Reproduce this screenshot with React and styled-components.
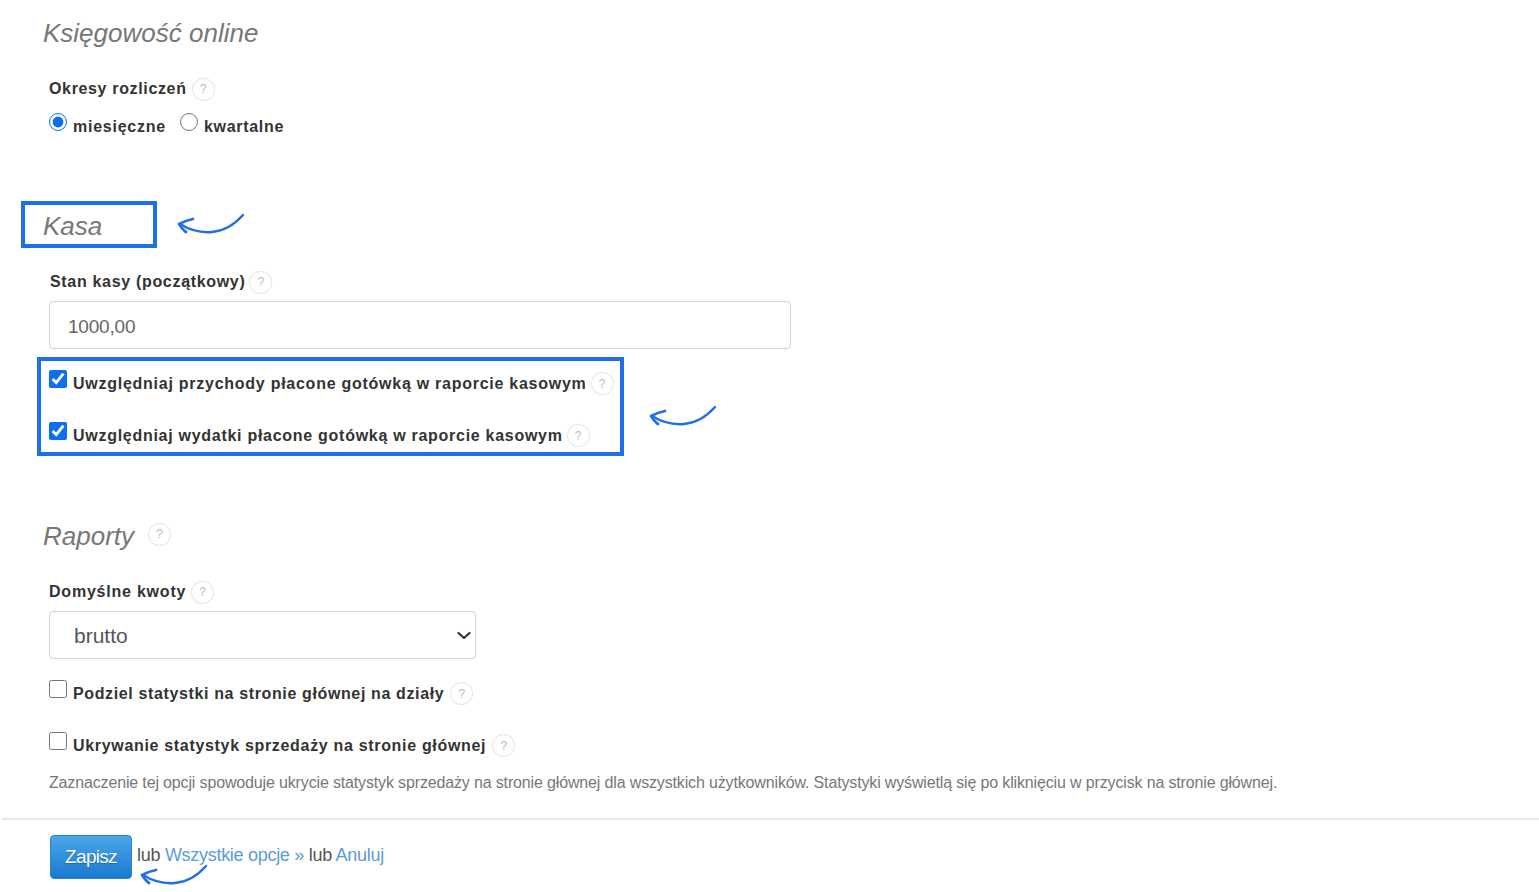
import React from "react";
import styled, { createGlobalStyle } from "styled-components";

const Global = createGlobalStyle`
  html, body { margin: 0; padding: 0; background: #fff; }
  body { font-family: "Liberation Sans", Arial, sans-serif; color: #333; }
`;
const chevron = `url("data:image/svg+xml,%3Csvg xmlns='http://www.w3.org/2000/svg' width='14' height='9' viewBox='0 0 14 9' fill='none' stroke='%23333' stroke-width='2.2' stroke-linecap='round' stroke-linejoin='round'%3E%3Cpath d='M1.5 2l5.5 5 5.5-5'/%3E%3C/svg%3E")`;

const Page = styled.div`
  width: 1539px; height: 892px; overflow: hidden; box-sizing: border-box;
  padding-top: 16px; display: flex; flex-direction: column; position: relative;
`;
const Section = styled.section`
  padding-left: 49px;
  margin-top: ${p => p.$top || 0}px;
  display: flex; flex-direction: column; align-items: flex-start;
`;
const Title = styled.h2`
  margin: 0 0 0 -6px; font-size: 26px; line-height: 34px; font-weight: 400; font-style: italic;
  color: #777; letter-spacing: 0; display: flex; align-items: center;
`;
const TitleRow = styled.div`
  display: flex; align-items: center; gap: 14px; margin-left: -6px;
  & > h2 { margin-left: 0; }
`;
const TitleHelp = styled.span`
  width: 23px; height: 23px; box-sizing: border-box; border: 1px solid #e6e6e6; border-radius: 50%;
  color: #bbb; font-size: 12px; display: inline-flex; align-items: center; justify-content: center;
  flex: none; background: #fff; margin-bottom: 4px;
  box-shadow: 0 0 1px rgba(0,0,0,.06);
`;
const KasaRow = styled.div`
  display: flex; align-items: center; gap: 20px; margin-left: -28px;
`;
const HighlightTitle = styled.div`
  width: 136px; height: 47px; box-sizing: border-box; border: 4px solid #1e6fe8;
  padding: 2px 0 0 18px; display: flex; align-items: center;
  & > h2 { margin: 0; }
`;
const LabelRow = styled.div`
  display: flex; align-items: center; gap: ${p => p.$gap ?? 5}px; margin-top: ${p => p.$top || 0}px;
  margin-left: ${p => p.$left || 0}px;
`;
const Label = styled.span`
  font-size: 16px; line-height: 24px; font-weight: 700; color: #333; white-space: nowrap;
  letter-spacing: ${p => p.$ls ?? 0.65}px;
`;
const Help = styled.span`
  width: 23px; height: 23px; box-sizing: border-box; border: 1px solid #e6e6e6; border-radius: 50%;
  color: #bbb; font-size: 12px; display: inline-flex; align-items: center; justify-content: center;
  flex: none; background: #fff;
  box-shadow: 0 0 1px rgba(0,0,0,.06);
`;
const Options = styled.div`
  display: flex; align-items: flex-start; margin-top: 12px;
`;
const Option = styled.label`
  display: flex; align-items: flex-start; margin-right: ${p => p.$mr || 0}px;
`;
const Radio = styled.input.attrs({ type: "radio" })`
  width: 18px; height: 18px; margin: 0 6px 0 0; accent-color: #0b6ef5; flex: none;
`;
const OptionText = styled(Label)`
  margin-top: 2px; display: block;
`;
const Field = styled.input`
  width: 742px; height: 48px; box-sizing: border-box; border: 1px solid #d4d4d4; border-radius: 4px;
  padding: 3px 0 0 18px; margin-top: 7px; font: 19px "Liberation Sans", sans-serif;
  color: #666; outline: none; letter-spacing: -0.2px; background: #fff;
`;
const CheckGroup = styled.div`
  width: 587px; height: 99px; box-sizing: border-box; border: 4px solid #1e6fe8;
  margin: 8px 0 0 -12px; padding: 9px 0 0 8px; display: flex; flex-direction: column; gap: 27px;
`;
const CheckRow = styled.label`
  display: flex; align-items: flex-start; height: 25px; margin-top: ${p => p.$top || 0}px;
`;
const Check = styled.input.attrs({ type: "checkbox" })`
  width: 18px; height: 18px; margin: 0 6px 0 0; accent-color: #0b6ef5; flex: none;
`;
const CheckText = styled(Label)`
  margin: 2px ${p => p.$after ?? 5}px 0 0; display: block;
`;
const CheckHelp = styled(Help)`
  margin-top: 2px;
`;
const Dropdown = styled.select`
  width: 427px; height: 48px; box-sizing: border-box; border: 1px solid #d4d4d4; border-radius: 4px;
  margin-top: 7px; padding-left: 24px; font: 21px "Liberation Sans", sans-serif; color: #555;
  appearance: none; background: #fff ${chevron} no-repeat right 4px center;
`;
const Note = styled.p`
  margin: 14px 0 0; font-size: 16px; line-height: 24px; color: #777; white-space: nowrap; letter-spacing: -0.15px;
`;
const Footer = styled.footer`
  position: absolute; left: 2px; right: 0; top: 818px; height: 74px; box-sizing: border-box;
  border-top: 2px solid #e8e8e8; padding: 15px 0 0 48px; display: flex; align-items: flex-start;
  font-size: 18px; line-height: 40px; color: #555; letter-spacing: -0.29px;
`;
const SaveButton = styled.button`
  width: 82px; height: 44px; box-sizing: border-box; border: 1px solid #2a85d0; border-radius: 4px;
  background: linear-gradient(#4ba6ea, #1b79d0); color: #fff; font: 19px "Liberation Sans", sans-serif;
  letter-spacing: -0.7px; padding: 0; margin-right: 5px; text-shadow: 0 1px 1px rgba(0,0,0,.25);
`;
const FooterText = styled.span`
  white-space: pre;
`;
const FooterLink = styled.a`
  color: #5c9cd8; text-decoration: none;
`;
const ArrowSvg = styled.svg`
  display: block; flex: none; overflow: visible;
`;
const ArrowSlot = styled.div`
  position: absolute; left: ${p => p.$x}px; top: ${p => p.$y}px;
`;

const Arrow = () => (
  <ArrowSvg width="68" height="24" viewBox="0 0 68 24" fill="none" stroke="#1e6fe8" strokeLinecap="round" strokeLinejoin="round">
    <path d="M66 2 C58 11 48 18 35 19 C23 20 11 16 3 11" strokeWidth="2.4" />
    <path d="M16 6 C11 7 6 9 2 11 C4 14 6 17 9 19" strokeWidth="2.8" />
  </ArrowSvg>
);

export default function App() {
  return (
    <Page>
      <Global />
      <Section>
        <Title>Księgowość online</Title>
        <LabelRow $top={27}><Label>Okresy rozliczeń</Label><Help>?</Help></LabelRow>
        <Options>
          <Option $mr={14}><Radio name="okres" defaultChecked /><OptionText $ls={0.75}>miesięczne</OptionText></Option>
          <Option><Radio name="okres" /><OptionText $ls={0.7}>kwartalne</OptionText></Option>
        </Options>
      </Section>
      <Section $top={62}>
        <KasaRow>
          <HighlightTitle><Title>Kasa</Title></HighlightTitle>
          <Arrow />
        </KasaRow>
        <LabelRow $top={22} $gap={4} $left={1}><Label $ls={0.68}>Stan kasy (początkowy)</Label><Help>?</Help></LabelRow>
        <Field defaultValue="1000,00" />
        <CheckGroup>
          <CheckRow><Check defaultChecked /><CheckText $ls={0.74} $after={4}>Uwzględniaj przychody płacone gotówką w raporcie kasowym</CheckText><CheckHelp>?</CheckHelp></CheckRow>
          <CheckRow><Check defaultChecked /><CheckText $ls={0.72} $after={4}>Uwzględniaj wydatki płacone gotówką w raporcie kasowym</CheckText><CheckHelp>?</CheckHelp></CheckRow>
        </CheckGroup>
      </Section>
      <ArrowSlot $x={649} $y={405}><Arrow /></ArrowSlot>
      <Section $top={63}>
        <TitleRow><Title>Raporty</Title><TitleHelp>?</TitleHelp></TitleRow>
        <LabelRow $top={27}><Label $ls={0.78}>Domyślne kwoty</Label><Help>?</Help></LabelRow>
        <Dropdown defaultValue="brutto"><option>brutto</option><option>netto</option></Dropdown>
        <CheckRow $top={21}><Check /><CheckText $ls={0.63} $after={6}>Podziel statystki na stronie głównej na działy</CheckText><CheckHelp>?</CheckHelp></CheckRow>
        <CheckRow $top={27}><Check /><CheckText $ls={0.68} $after={6}>Ukrywanie statystyk sprzedaży na stronie głównej</CheckText><CheckHelp>?</CheckHelp></CheckRow>
        <Note>Zaznaczenie tej opcji spowoduje ukrycie statystyk sprzedaży na stronie głównej dla wszystkich użytkowników. Statystyki wyświetlą się po kliknięciu w przycisk na stronie głównej.</Note>
      </Section>
      <Footer>
        <SaveButton type="button">Zapisz</SaveButton>
        <FooterText>lub <FooterLink href="#">Wszystkie opcje »</FooterLink> lub <FooterLink href="#">Anuluj</FooterLink></FooterText>
      </Footer>
      <ArrowSlot $x={140} $y={864}><Arrow /></ArrowSlot>
    </Page>
  );
}
